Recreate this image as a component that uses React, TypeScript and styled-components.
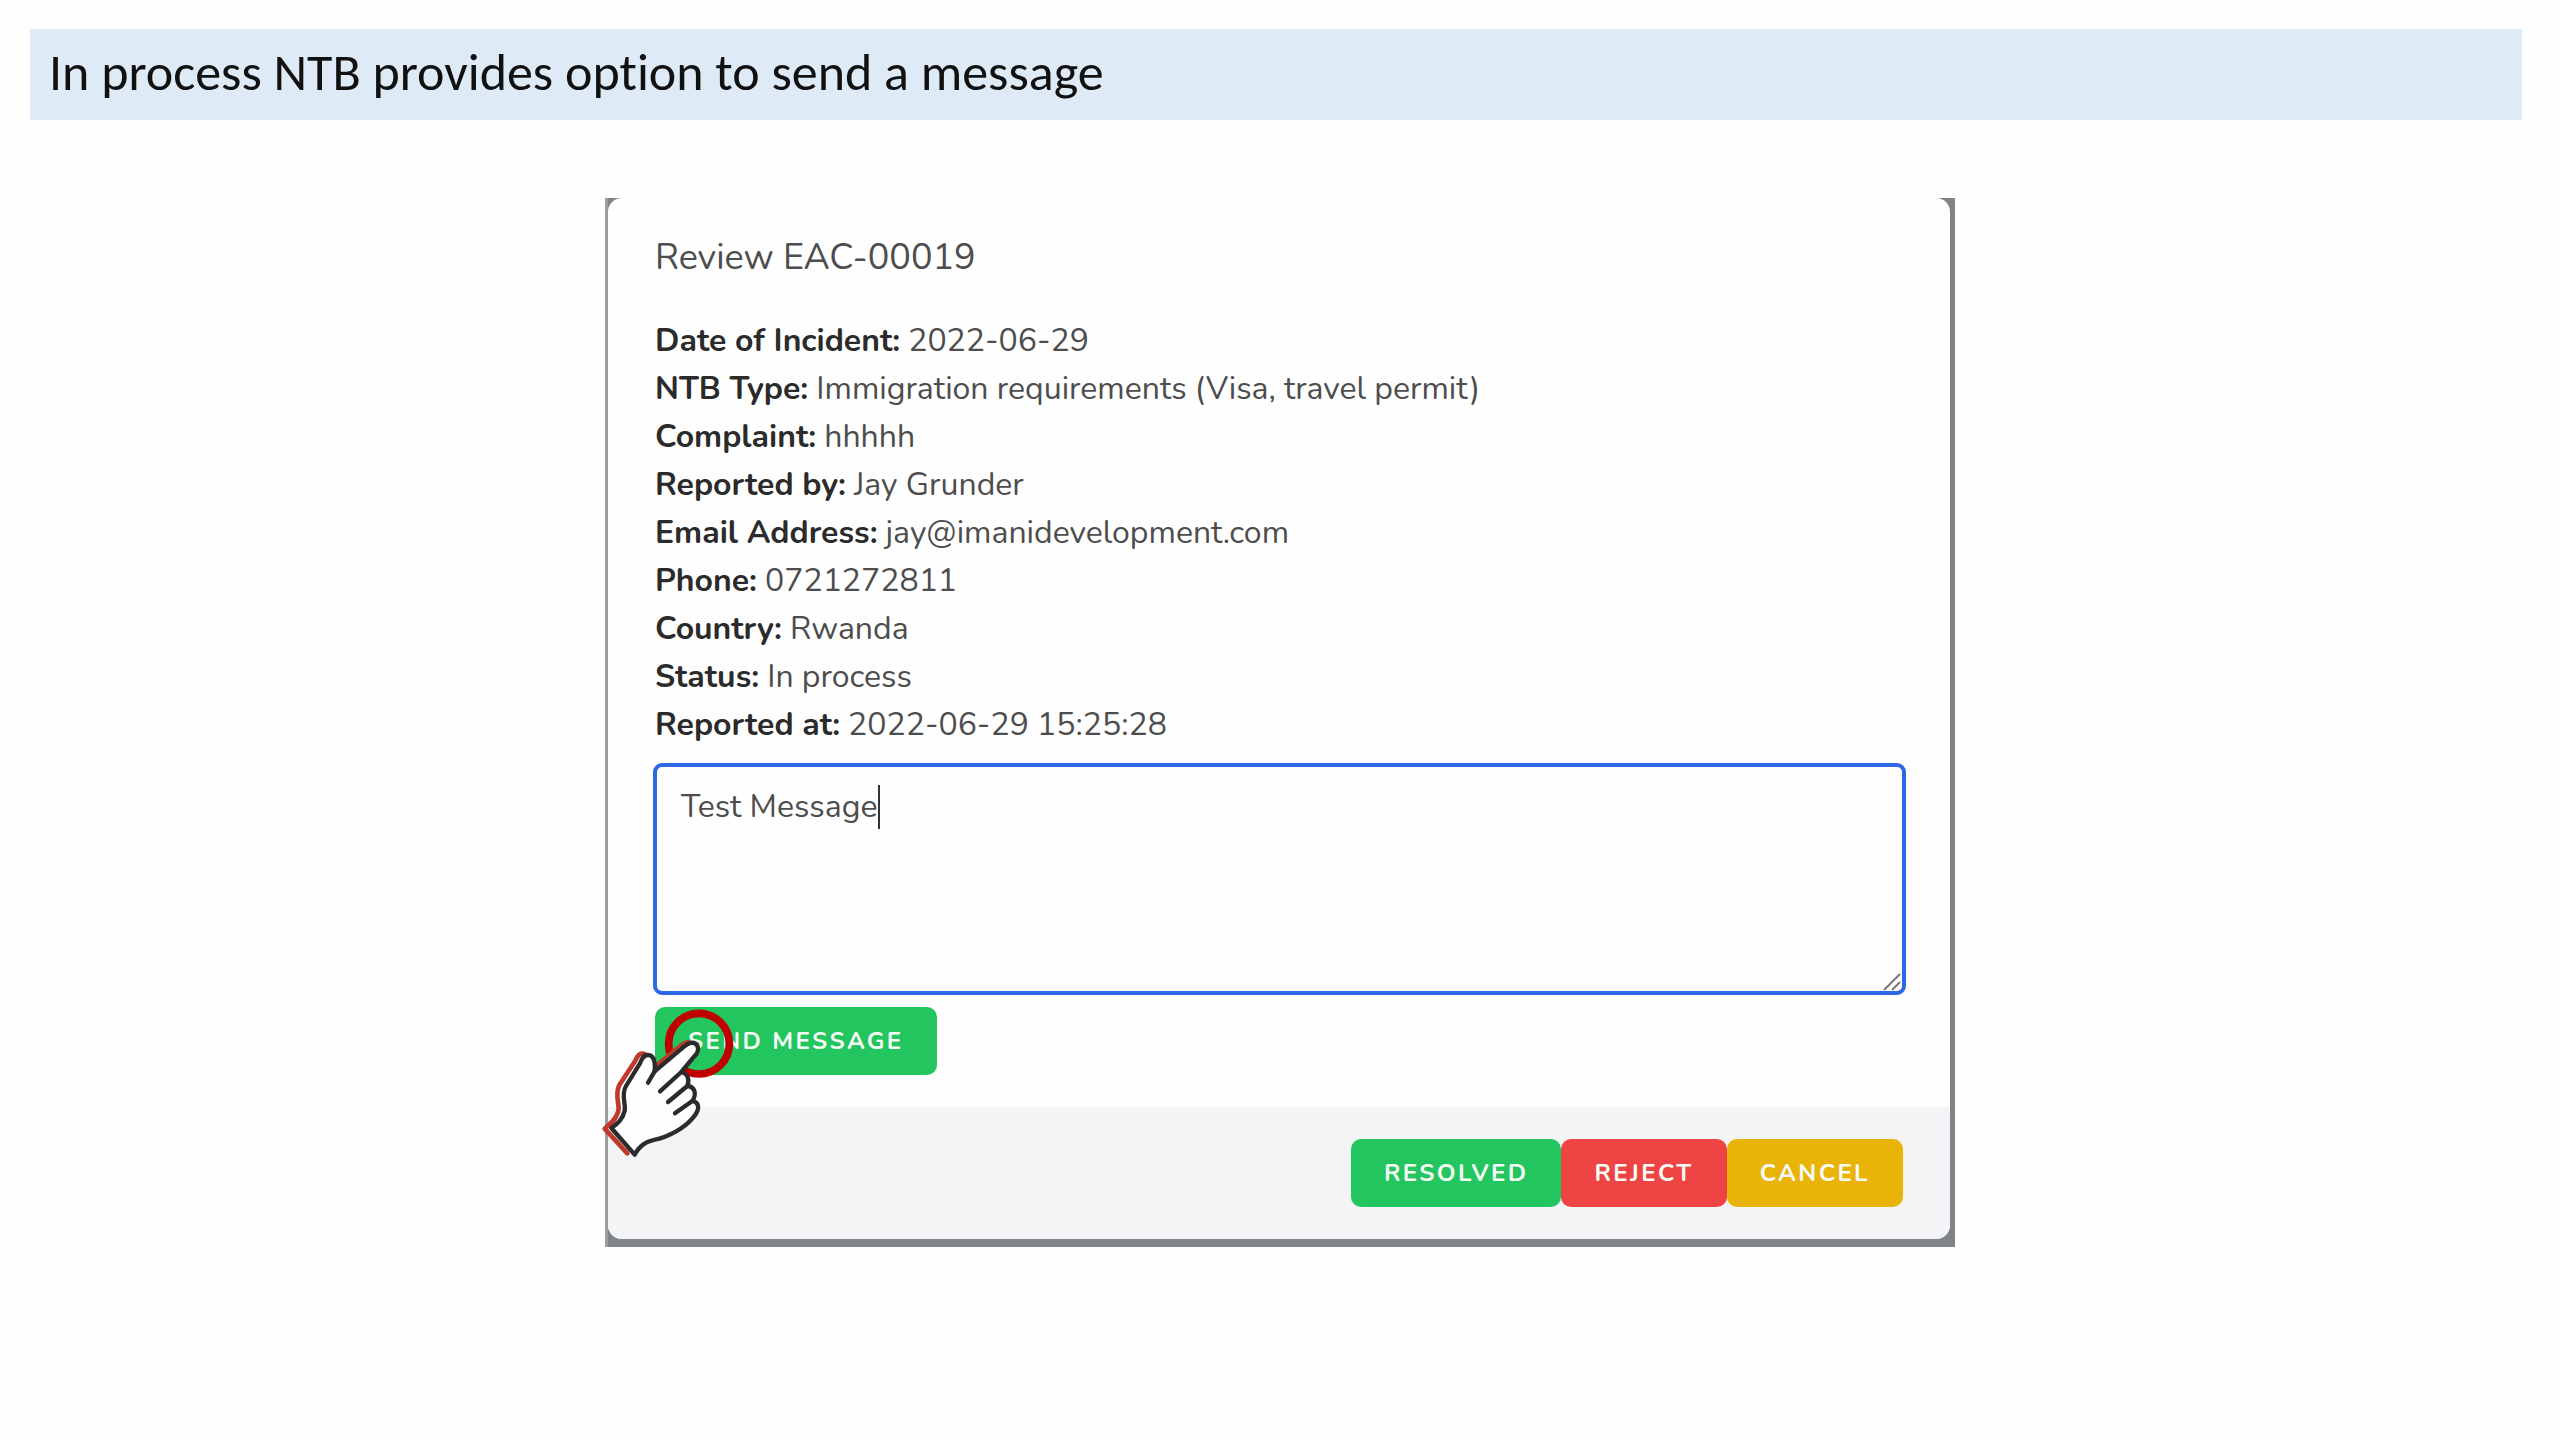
import React, { useState } from 'react';
import styled, { createGlobalStyle } from 'styled-components';

const GlobalStyle = createGlobalStyle`
  *, *::before, *::after { box-sizing: border-box; }
  body { margin: 0; background: #fefefe; }
`;

const Slide = styled.main`
  padding: 29px 0 48px;
`;

const SlideTitle = styled.h1`
  margin: 0 38px 78px 30px;
  padding: 0 19px 5px;
  background: #deeaf6;
  color: #111;
  font-family: Carlito, Calibri, Lato, "Liberation Sans", sans-serif;
  font-size: 52px;
  font-weight: 400;
  font-variant-ligatures: none;
  line-height: 86px;
`;

const Backdrop = styled.div`
  max-width: 1350px;
  margin: 0 auto;
  padding: 0 5px 8px 3px;
  background: linear-gradient(to right, #9a9da1 3px, #808489 3px);
`;

const Dialog = styled.section`
  border-radius: 14px;
  background: #fefefe;
  font-family: Nunito, Lato, "Liberation Sans", sans-serif;
  color: #4d4d4d;
`;

const Body = styled.div`
  padding: 32px 46px 32px 47px;
`;

const DialogTitle = styled.h2`
  margin: 0 0 31px;
  font-size: 36px;
  font-weight: 400;
  line-height: 56px;
`;

const Details = styled.dl`
  margin: 0 0 14px;
  font-size: 32px;
  line-height: 48px;
`;

const Detail = styled.div`
  display: flex;
  gap: 8px;
`;

const Term = styled.dt`
  font-weight: 700;
  color: #2b2b2b;
`;

const Value = styled.dd`
  margin: 0;
`;

const MessageField = styled.div`
  position: relative;
  margin: 0 -2px 12px;
`;

const Message = styled.textarea`
  display: block;
  width: 100%;
  height: 232px;
  padding: 16px 24px;
  border: 4px solid #2f68e6;
  border-radius: 9px;
  outline: none;
  resize: none;
  background: #fefefe;
  color: #4d4d4d;
  caret-color: transparent;
  font-family: inherit;
  font-size: 32px;
  line-height: 48px;
`;

const Caret = styled.span`
  position: absolute;
  top: 22px;
  left: 225px;
  width: 2px;
  height: 44px;
  background: #333;
`;

const Grip = styled.svg`
  position: absolute;
  right: 5px;
  bottom: 4px;
`;

const SendArea = styled.div`
  position: relative;
  display: flex;
`;

const Pointer = styled.svg`
  position: absolute;
  z-index: 1;
  top: 0;
  left: -55px;
  overflow: visible;
  pointer-events: none;
`;

const Button = styled.button<{ $tone: string }>`
  height: 68px;
  padding: 0 33px;
  border: 0;
  border-radius: 10px;
  background: ${(p) => p.$tone};
  color: #f5fbf5;
  font-family: inherit;
  font-size: 24px;
  font-weight: 700;
  letter-spacing: 0.1em;
  text-transform: uppercase;
`;

const Footer = styled.footer`
  display: flex;
  justify-content: flex-end;
  padding: 32px 47px;
  border-radius: 0 0 14px 14px;
  background: #f3f4f6;
`;

const details = [
  ['Date of Incident', '2022-06-29'],
  ['NTB Type', 'Immigration requirements (Visa, travel permit)'],
  ['Complaint', 'hhhhh'],
  ['Reported by', 'Jay Grunder'],
  ['Email Address', 'jay@imanidevelopment.com'],
  ['Phone', '0721272811'],
  ['Country', 'Rwanda'],
  ['Status', 'In process'],
  ['Reported at', '2022-06-29 15:25:28'],
];

const HandPointer = () => (
  <Pointer width="138" height="153" viewBox="30 81 414 459" aria-hidden="true">
    <circle cx="327" cy="191" r="91" fill="none" stroke="#c00000" strokeWidth="23" />
    <path
      d="M164 222 C148 218 142 228 136 242 L88 315 C72 348 92 375 84 396 C76 422 60 432 44 446 L112 520 M186 268 L274 196 C282 188 288 187 296 186"
      fill="none"
      stroke="#c0392b"
      strokeWidth="14"
      strokeLinecap="round"
      strokeLinejoin="round"
    />
    <path
      d="M64 444 C84 430 98 418 104 392 C108 368 92 345 108 318 L150 250 C156 232 166 222 180 226 C194 232 196 250 194 274 L282 200 C296 186 314 184 322 197 C328 209 322 220 312 230 L274 276 C292 280 300 298 292 318 C312 320 322 338 308 362 C326 368 330 384 316 404 C290 440 250 462 208 476 C166 484 150 496 134 524 Z"
      fill="#fefefe"
      stroke="#2b2b2b"
      strokeWidth="13"
      strokeLinejoin="round"
    />
    <path
      d="M194 274 L174 308 M274 276 L210 334 M292 318 L234 366 M308 362 L255 400"
      fill="none"
      stroke="#2b2b2b"
      strokeWidth="13"
      strokeLinecap="round"
    />
  </Pointer>
);

export default function App() {
  const [message, setMessage] = useState('Test Message');
  return (
    <>
      <GlobalStyle />
      <Slide>
        <SlideTitle>In process NTB provides option to send a message</SlideTitle>
        <Backdrop>
          <Dialog role="dialog" aria-labelledby="review-title">
            <Body>
              <DialogTitle id="review-title">Review EAC-00019</DialogTitle>
              <Details>
                {details.map(([term, value]) => (
                  <Detail key={term}>
                    <Term>{term}:</Term>
                    <Value>{value}</Value>
                  </Detail>
                ))}
              </Details>
              <MessageField>
                <Message
                  aria-label="Message"
                  value={message}
                  onChange={(e) => setMessage(e.target.value)}
                />
                <Caret />
                <Grip width="18" height="18" viewBox="0 0 18 18" aria-hidden="true">
                  <path d="M1 17 L17 1 M9 17 L17 9" stroke="#777" strokeWidth="2" />
                </Grip>
              </MessageField>
              <SendArea>
                <Button type="button" $tone="#22c55e">Send Message</Button>
                <HandPointer />
              </SendArea>
            </Body>
            <Footer>
              <Button type="button" $tone="#22c55e">Resolved</Button>
              <Button type="button" $tone="#ef4444">Reject</Button>
              <Button type="button" $tone="#eab308">Cancel</Button>
            </Footer>
          </Dialog>
        </Backdrop>
      </Slide>
    </>
  );
}
